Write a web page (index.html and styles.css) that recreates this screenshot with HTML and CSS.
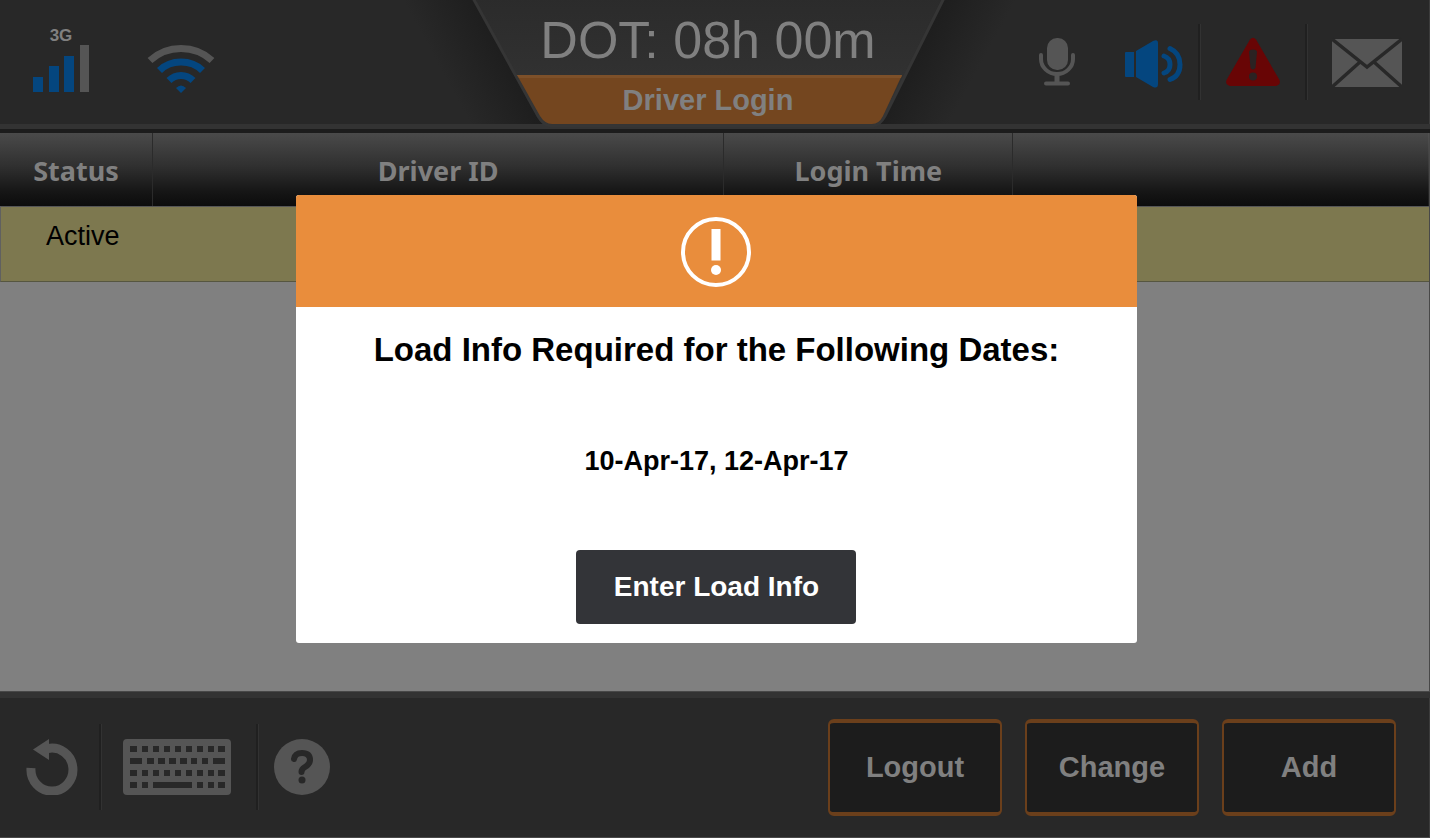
FILE: index.html
```html
<!DOCTYPE html>
<html lang="en">
<head>
<meta charset="utf-8">
<meta name="viewport" content="width=device-width, initial-scale=1">
<title>Driver Login</title>
<link rel="stylesheet" href="styles.css">
</head>
<body>
<div class="screen">
  <header class="topbar">
    <div class="signals">
      <div class="cell">
        <span class="cell-label">3G</span>
        <svg width="56" height="48" viewBox="0 0 56 48" aria-hidden="true">
          <path fill="#04467f" d="M0 32h10v15H0zM16 21h10v26H16zM31 11h10v36H31z"/>
          <path fill="#555" d="M47 0h9v47h-9z"/>
        </svg>
      </div>
      <svg width="68" height="48" viewBox="0 0 68 48" fill="none" stroke-width="7" aria-label="Wi-Fi">
        <path stroke="#555" d="M3 15.500Q16 3.500 34 3.500T65 15.500"/>
        <path stroke="#04467f" d="M12.500 25.500Q21 17 34 17T55.500 25.500M22 35.500Q27 30.500 34 30.500T46 35.500"/>
        <path fill="#04467f" d="M29 43Q34 38 39 43L34 48z"/>
      </svg>
    </div>

    <div class="plate">
      <svg class="plate-shape" viewBox="0 0 470 124" width="470" height="124" aria-hidden="true">
        <defs>
          <linearGradient id="plate" x2="0" y2="1"><stop stop-color="#2b2b2b"/><stop offset="1" stop-color="#353535"/></linearGradient>
          <linearGradient id="shadeL" gradientUnits="userSpaceOnUse" x1="35" y1="62" x2="-20" y2="92"><stop stop-color="#1e1e1e"/><stop offset="1" stop-color="#282828"/></linearGradient>
          <linearGradient id="shadeR" gradientUnits="userSpaceOnUse" x1="438" y1="62" x2="493" y2="92"><stop stop-color="#1e1e1e"/><stop offset="1" stop-color="#282828"/></linearGradient>
        </defs>
        <path fill="url(#shadeL)" d="M-80 0H5L80 124H-80z"/>
        <path fill="url(#shadeR)" d="M465 0H550V124H400z"/>
        <path fill="url(#plate)" stroke="#353535" stroke-width="3" d="M0-2L65 116Q70 125 78 126H400Q407 125 412 116L471-2z"/>
        <path fill="#74461f" d="M44 75H429L410 116Q406 124 399 124H79Q72 124 67 116z"/>
        <path fill="#7d5029" d="M44 75H429L428 78H46z"/>
      </svg>
      <div class="dot">DOT: 08h 00m</div>
      <h1 class="page-title">Driver Login</h1>
    </div>

    <div class="tools">
      <button class="icon mic" aria-label="Microphone">
        <svg width="38" height="50" viewBox="0 0 38 50">
          <rect x="9" y="1" width="21" height="32" rx="10" fill="#555"/>
          <path fill="none" stroke="#555" stroke-width="4" stroke-linecap="round" d="M3 18v4a16 15 0 0 0 32 0v-4"/>
          <path fill="none" stroke="#555" stroke-width="5" d="M19 36v10"/>
          <path fill="none" stroke="#555" stroke-width="4" stroke-linecap="round" d="M8 46.500h22"/>
        </svg>
      </button>
      <button class="icon" aria-label="Sound">
        <svg width="60" height="54" viewBox="0 0 60 54">
          <path fill="#04467f" d="M2 17h8v25H2Q1 42 1 41V18Q1 17 2 17zM12 16L29 6Q34 4 34 8V49Q34 54 29 52L12 42z"/>
          <path fill="none" stroke="#04467f" stroke-width="5" stroke-linecap="round" d="M40 21Q46 23 46 29.500T40 38M46 13.500Q56 18 56 29.500T46 44.500"/>
        </svg>
      </button>
      <span class="rule"></span>
      <button class="icon" aria-label="Alert">
        <svg width="56" height="50" viewBox="0 0 56 50">
          <path fill="#680505" d="M25 2.500Q28-1 31 2.500L54.500 43Q56 48 51 49H5Q0 48 1.500 43z"/>
          <path fill="#2b2222" d="M24 15Q24 12.500 28 12.500T32 15L30.500 31Q28 34 25.500 31z"/>
          <circle cx="28" cy="39.500" r="4" fill="#2b2222"/>
        </svg>
      </button>
      <span class="rule"></span>
      <button class="icon" aria-label="Messages">
        <svg width="70" height="50" viewBox="0 0 70 50">
          <rect y="2" width="70" height="48" fill="#555"/>
          <path fill="none" stroke="#282828" stroke-width="3.500" d="M0 2L35 30L70 2M0 50L28 25M70 50L42 25"/>
        </svg>
      </button>
    </div>
  </header>

  <main class="content">
    <table class="drivers">
      <thead>
        <tr><th class="c-status">Status</th><th class="c-id">Driver ID</th><th class="c-time">Login Time</th><th class="c-rest"></th></tr>
      </thead>
      <tbody>
        <tr><td>Active</td><td></td><td></td><td></td></tr>
      </tbody>
    </table>
  </main>

  <footer class="bottombar">
    <div class="nav">
      <button class="icon" aria-label="Back">
        <svg width="52" height="56" viewBox="0 0 52 56">
          <path fill="none" stroke="#555" stroke-width="9" d="M5 29a21 21.500 0 1 0 17-19.500"/>
          <path fill="#555" d="M7 10.500L23 0V21z"/>
        </svg>
      </button>
      <span class="rule"></span>
      <button class="icon" aria-label="Keyboard">
        <svg width="108" height="56" viewBox="0 0 108 56">
          <rect width="108" height="56" rx="4" fill="#555"/>
          <g fill="none" stroke="#282828" stroke-width="6">
            <path d="M7 10h7m5 0h6m5 0h6m5 0h6m5 0h6m5 0h6m5 0h6m5 0h6m4 0h7"/>
            <path d="M7 22h12m5 0h7m4 0h7m4 0h7m4 0h7m4 0h6m5 0h6m5 0h12"/>
            <path d="M7 34h7m5 0h6m5 0h6m5 0h6m5 0h6m5 0h6m5 0h6m5 0h6m4 0h7"/>
            <path d="M7 46h7m5 0h6m5 0h39m5 0h6m5 0h6m4 0h7"/>
          </g>
        </svg>
      </button>
      <span class="rule"></span>
      <button class="icon help" aria-label="Help">
        <svg width="56" height="56" viewBox="0 0 56 56">
          <circle cx="28" cy="28" r="28" fill="#555"/>
          <path fill="none" stroke="#282828" stroke-width="6" stroke-linecap="round" d="M20 20Q21 14 28 14Q36 14 36 21Q36 25 31 28Q27.500 30 27.500 33"/>
          <circle cx="28" cy="41" r="3.500" fill="#282828"/>
        </svg>
      </button>
    </div>
    <div class="actions">
      <button class="action">Logout</button>
      <button class="action">Change</button>
      <button class="action">Add</button>
    </div>
  </footer>

  <div class="overlay">
    <section class="dialog" role="alertdialog" aria-modal="true" aria-labelledby="dialog-title">
      <div class="dialog-head">
        <svg width="70" height="70" viewBox="0 0 70 70" aria-hidden="true">
          <circle cx="35" cy="35" r="33" fill="none" stroke="#fff" stroke-width="4"/>
          <path fill="#fff" d="M30.500 12h9v31.500h-9z"/>
          <circle cx="35" cy="53" r="5" fill="#fff"/>
        </svg>
      </div>
      <div class="dialog-body">
        <h2 class="dialog-title" id="dialog-title">Load Info Required for the Following Dates:</h2>
        <p class="dates">10-Apr-17, 12-Apr-17</p>
        <button class="primary">Enter Load Info</button>
      </div>
    </section>
  </div>
</div>
</body>
</html>
```

FILE: styles.css
```css
* {
  box-sizing: border-box;
}

body {
  margin: 0;
  background: #808080;
  font-family: "Liberation Sans", Arial, sans-serif;
}

button {
  font-family: inherit;
}

svg {
  display: block;
}

.screen {
  position: relative;
  display: flex;
  flex-direction: column;
  min-height: 100vh;
}

/* Top bar */
.topbar {
  display: grid;
  grid-template-columns: 1fr auto 1fr;
  padding-right: 14px;
  background: #282828;
  border-bottom: 4px solid #1c1c1c;
  box-shadow: inset 0 -5px #333, inset -1px 0 #3c3c3c;
}

.signals {
  display: flex;
  align-items: flex-end;
  gap: 58px;
  padding: 0 0 36px 33px;
}

.cell {
  display: flex;
  flex-direction: column;
  align-items: center;
}

.cell-label {
  color: #808080;
  font-size: 17px;
  font-weight: bold;
  line-height: 18px;
}

.plate {
  position: relative;
  padding-bottom: 9px;
  text-align: center;
  color: #808080;
}

.plate-shape {
  position: absolute;
  inset: 0;
  overflow: visible;
}

.dot {
  position: relative;
  width: 470px;
  font-size: 52px;
  line-height: 80px;
}

.page-title {
  position: relative;
  margin: 0;
  font-size: 29px;
  line-height: 40px;
}

.tools {
  display: flex;
  justify-content: flex-end;
  align-items: center;
  gap: 24px;
  padding: 0 14px 5px 0;
}

.icon {
  flex: none;
  padding: 0;
  border: 0;
  background: none;
}

.mic {
  margin-right: 24px;
}

.rule {
  flex: none;
  width: 3px;
  height: 76px;
  border-left: 2px solid #202020;
  border-right: 1px solid #323232;
}

.tools .icon + .rule {
  margin-left: -10px;
}

.tools .rule ~ .rule {
  margin-left: 0;
}

/* Driver table */
.content {
  flex: 1;
  background: #808080;
  border-right: 1px solid #484848;
}

.drivers {
  width: 100%;
  border-collapse: separate;
  border-spacing: 0;
  table-layout: fixed;
}

.c-status {
  width: 10.7%;
}

.c-id {
  width: 40%;
}

.c-time {
  width: 20.2%;
}

.drivers thead tr {
  background: linear-gradient(#4a4a4a, #303030 45%, #161616 80%, #0c0c0c);
}

.drivers th {
  height: 73px;
  padding: 3px 0 0;
  border-right: 1px solid #2b2b2b;
  color: #808080;
  font-family: "Noto Sans", "Open Sans", sans-serif;
  font-size: 27px;
  font-weight: bold;
  line-height: 36px;
}

.drivers th:last-child {
  border-right: 0;
}

.drivers td {
  height: 76px;
  padding: 11px 0 0;
  background: #7d784f;
  border-top: 1px solid #565656;
  border-bottom: 1px solid #565640;
  font-size: 27px;
  line-height: 36px;
  vertical-align: top;
}

.drivers td:first-child {
  padding-left: 45px;
  border-left: 1px solid #606060;
}

/* Bottom bar */
.bottombar {
  display: flex;
  justify-content: space-between;
  align-items: center;
  padding: 27px 34px 21px 26px;
  background: #282828;
  border-top: 1px solid #484848;
  border-bottom: 1px solid #484848;
  box-shadow: inset 0 6px #333, inset -1px 0 #3c3c3c;
}

.nav {
  display: flex;
  align-items: center;
  gap: 21px;
  padding-bottom: 2px;
}

.nav .rule {
  height: 86px;
}

.nav .rule:nth-of-type(2) {
  margin-left: 4px;
}

.nav .help {
  margin-left: -6px;
}

.actions {
  display: flex;
  gap: 23px;
}

.action {
  width: 174px;
  height: 97px;
  padding: 0;
  border: solid #6b3f1b;
  border-width: 4px 2px;
  border-radius: 6px;
  background: #1c1c1c;
  color: #808080;
  font-size: 29px;
  font-weight: bold;
}

/* Dialog */
.overlay {
  position: absolute;
  inset: 0;
  display: flex;
  justify-content: center;
  align-items: center;
  padding-left: 3px;
}

.dialog {
  width: 59%;
  overflow: hidden;
  border-radius: 3px;
  background: #fff;
}

.dialog-head {
  display: flex;
  justify-content: center;
  padding: 22px 0 20px;
  background: #e98d3c;
}

.dialog-body {
  display: flex;
  flex-direction: column;
  align-items: center;
  padding: 22px 16px 19px;
  text-align: center;
}

.dialog-title {
  margin: 0;
  font-size: 33px;
  line-height: 42px;
}

.dates {
  margin: 72px 0 71px;
  font-size: 27px;
  font-weight: bold;
  line-height: 36px;
}

.primary {
  width: 280px;
  height: 74px;
  padding: 0;
  border: 0;
  border-radius: 4px;
  background: #333438;
  color: #fff;
  font-size: 28px;
  font-weight: bold;
}
```
